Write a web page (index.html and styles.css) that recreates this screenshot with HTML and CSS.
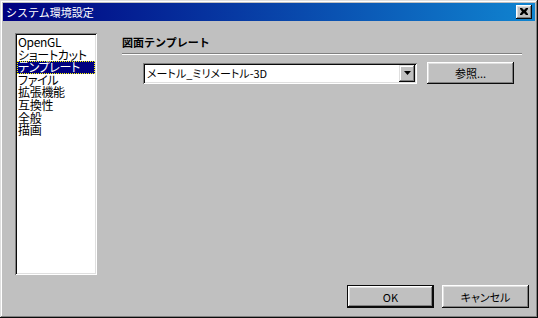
FILE: index.html
```html
<!DOCTYPE html>
<html lang="ja">
<head>
<meta charset="UTF-8">
<title>システム環境設定</title>
<link rel="stylesheet" href="styles.css">
</head>
<body>

<div class="window">
    <div class="titlebar">
        <span class="title">システム環境設定</span>
        <span class="close-button">
            <svg width="8" height="7" viewBox="0 0 8 7"><path d="M0 0h2l2 2 2-2h2v1L6 3.5 8 6v1H6L4 5 2 7H0V6l2-2.5L0 1z" fill="#000"/></svg>
        </span>
    </div>

    <div class="content">
        <ul class="listbox">
            <li>OpenGL</li>
            <li>ショートカット</li>
            <li class="selected">テンプレート</li>
            <li>ファイル</li>
            <li>拡張機能</li>
            <li>互換性</li>
            <li>全般</li>
            <li>描画</li>
        </ul>

        <div class="panel">
            <div class="panel-header">図面テンプレート</div>
            <div class="panel-row">
                <div class="combo">
                    <span class="combo-text">メートル_ミリメートル-3D</span>
                    <span class="combo-arrow">
                        <svg width="7" height="4" viewBox="0 0 7 4"><path d="M0 0h7L3.5 4z" fill="#000"/></svg>
                    </span>
                </div>
                <button class="btn browse">参照...</button>
            </div>
        </div>
    </div>

    <div class="footer">
        <button class="btn default">OK</button>
        <button class="btn">キャンセル</button>
    </div>
</div>

</body>
</html>
```

FILE: styles.css
```css
body {
    margin: 0;
    background: #c0c0c0;
    font-family: "Noto Sans CJK JP", "Noto Sans", sans-serif;
    font-size: 11px;
    color: #000;
}
.window {
    width: 538px;
    height: 318px;
    box-sizing: border-box;
    padding: 3px;
    background: #c0c0c0;
    box-shadow: inset -1px -1px #0a0a0a, inset 1px 1px #dfdfdf,
                inset -2px -2px #808080, inset 2px 2px #fff;
    display: flex;
    flex-direction: column;
}
.titlebar {
    height: 18px;
    background: linear-gradient(to right, #000080, #1084d0);
    color: #fff;
    display: flex;
    justify-content: space-between;
    align-items: center;
    padding: 0 3px 0 3px;
}
.title {
    font-size: 11px;
    line-height: 18px;
}
.close-button {
    width: 16px;
    height: 14px;
    box-sizing: border-box;
    background: #c0c0c0;
    box-shadow: inset -1px -1px #0a0a0a, inset 1px 1px #fff,
                inset -2px -2px #808080, inset 2px 2px #dfdfdf;
    display: flex;
    justify-content: center;
    align-items: center;
    padding-bottom: 1px;
}
.content {
    display: flex;
    padding: 12px 0 0 12px;
}
.listbox {
    list-style: none;
    margin: 0;
    width: 82px;
    height: 242px;
    box-sizing: border-box;
    padding: 3px 2px;
    background: #fff;
    box-shadow: inset 1px 1px #808080, inset -1px -1px #fff,
                inset 2px 2px #0a0a0a, inset -2px -2px #dfdfdf;
    font-size: 12px;
    letter-spacing: -0.3px;
    font-feature-settings: "palt";
}
.listbox li {
    line-height: 12.6px;
    height: 12.6px;
    padding-left: 1px;
    white-space: nowrap;
}
.listbox li.selected {
    background: #000080;
    color: #fff;
    outline: 1px dotted #ff0;
    outline-offset: -1px;
}
.panel {
    margin-left: 25px;
    width: 400px;
}
.panel-header {
    font-weight: bold;
    line-height: 14px;
    padding-top: 2px;
    padding-bottom: 4px;
    border-bottom: 1px solid #808080;
    box-shadow: 0 1px #fff;
}
.panel-row {
    display: flex;
    align-items: center;
    gap: 10px;
    margin-top: 8px;
    padding-left: 21px;
}
.combo {
    width: 274px;
    height: 21px;
    box-sizing: border-box;
    background: #fff;
    box-shadow: inset 1px 1px #808080, inset -1px -1px #fff,
                inset 2px 2px #0a0a0a, inset -2px -2px #dfdfdf;
    display: flex;
    align-items: center;
    justify-content: space-between;
    padding: 2px;
}
.combo-text {
    padding-left: 2px;
    line-height: 15px;
    font-feature-settings: "palt";
}
.combo-arrow {
    width: 16px;
    height: 17px;
    box-sizing: border-box;
    background: #c0c0c0;
    box-shadow: inset -1px -1px #0a0a0a, inset 1px 1px #dfdfdf,
                inset -2px -2px #808080, inset 2px 2px #fff;
    display: flex;
    justify-content: center;
    align-items: center;
}
.btn {
    width: 87px;
    height: 23px;
    border: none;
    background: #c0c0c0;
    font-family: inherit;
    font-size: 11px;
    color: #000;
    padding: 0;
    font-feature-settings: "palt";
    box-shadow: inset -1px -1px #0a0a0a, inset 1px 1px #fff,
                inset -2px -2px #808080, inset 2px 2px #dfdfdf;
}
.btn.browse {
    height: 22px;
}
.btn.default {
    box-shadow: inset 0 0 0 1px #0a0a0a,
                inset -2px -2px #0a0a0a, inset 2px 2px #fff,
                inset -3px -3px #808080, inset 3px 3px #dfdfdf;
}
.footer {
    display: flex;
    justify-content: flex-end;
    gap: 8px;
    margin-top: 10px;
    padding-right: 6px;
}
```
